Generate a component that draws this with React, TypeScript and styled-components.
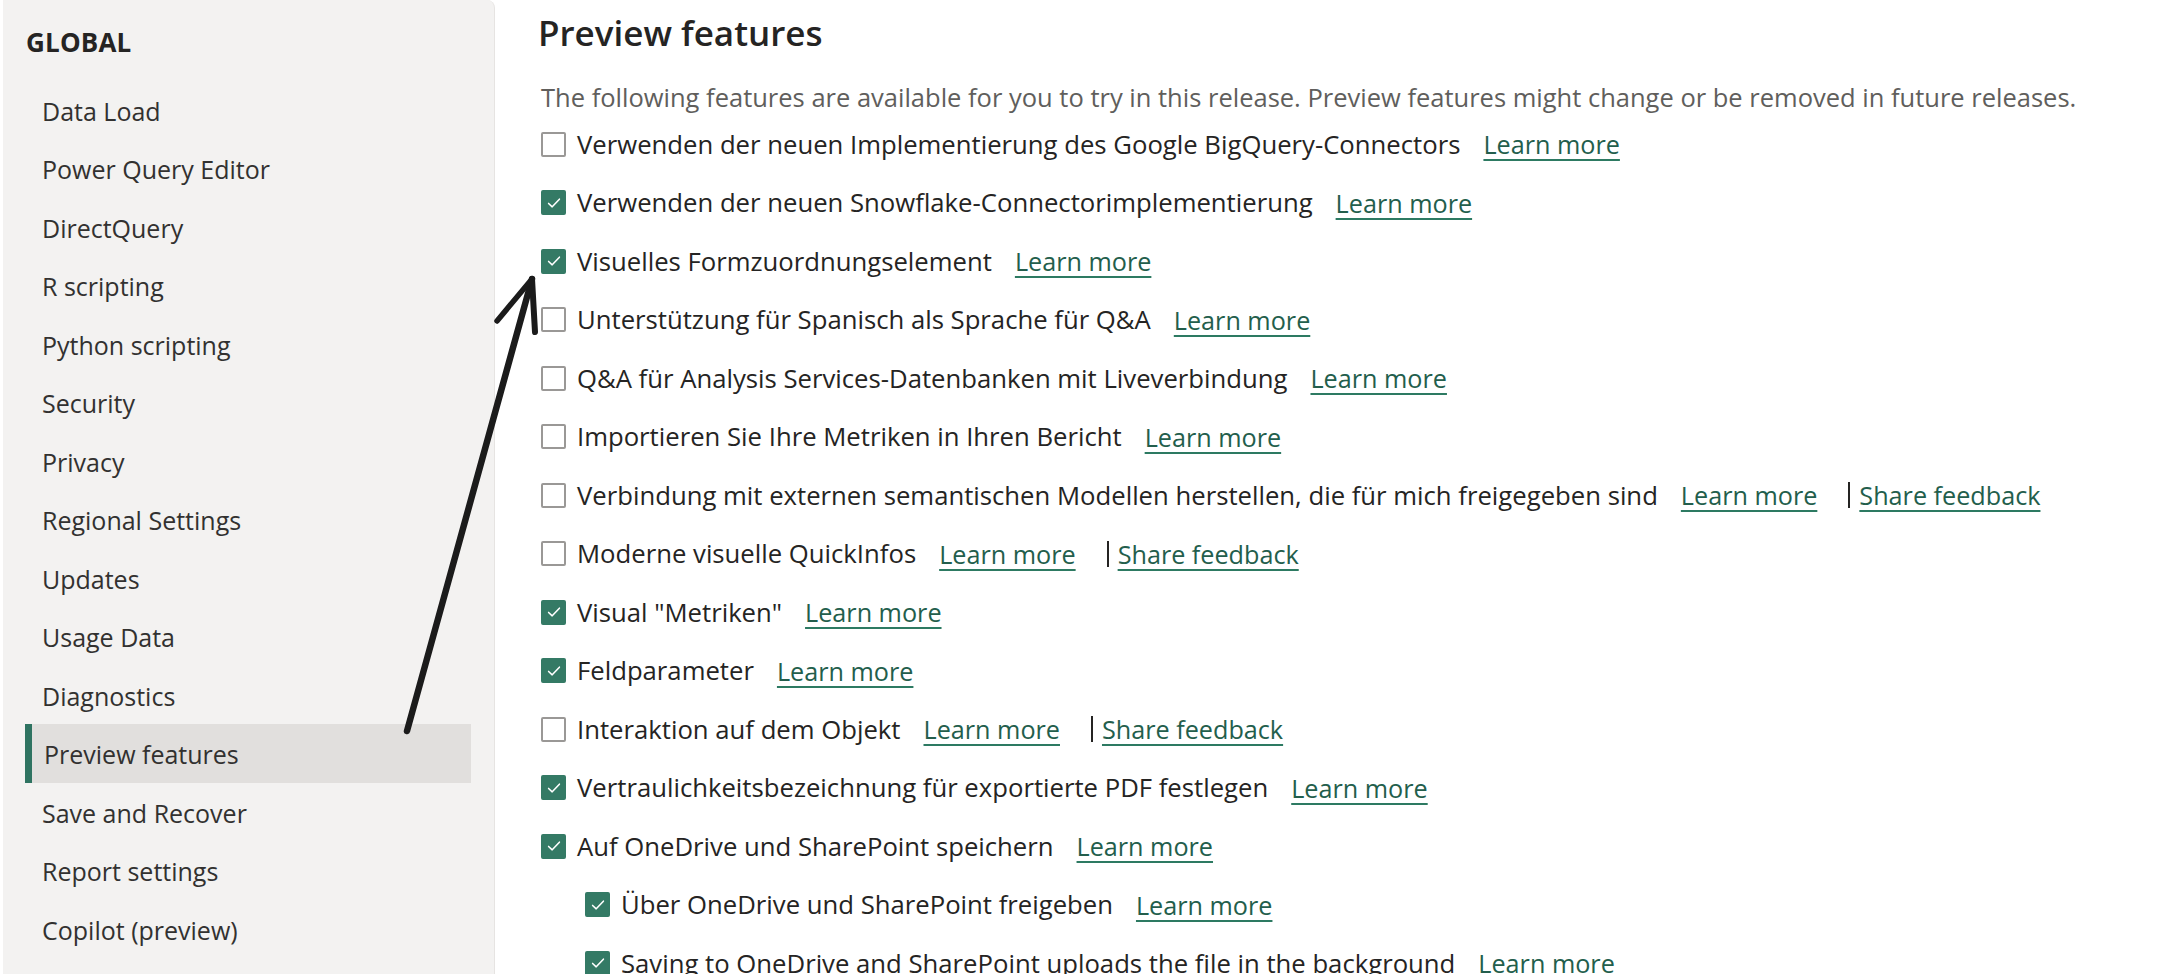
import React from "react";
import styled, { createGlobalStyle } from "styled-components";

const GlobalStyle = createGlobalStyle`
  html, body {
    margin: 0;
    padding: 0;
    background: #ffffff;
  }
  body {
    font-family: "Open Sans", "Noto Sans", "Liberation Sans", sans-serif;
    color: #252423;
  }
`;

const Page = styled.div`
  position: relative;
  display: flex;
  width: 2179px;
  height: 974px;
  overflow: hidden;
  background: #ffffff;
`;

const Sidebar = styled.nav`
  flex: 0 0 492px;
  margin-left: 3px;
  height: 100%;
  background: #f3f2f1;
  border-right: 1px solid #e6e4e2;
  border-top-right-radius: 8px;
  box-sizing: border-box;
  display: flex;
  flex-direction: column;
`;

const SectionTitle = styled.div`
  height: 80.5px;
  display: flex;
  align-items: center;
  padding-left: 23px;
  padding-top: 3px;
  box-sizing: border-box;
  font-size: 26px;
  font-weight: 700;
  color: #252423;
  letter-spacing: 0.2px;
`;

const NavList = styled.ul`
  list-style: none;
  margin: 0;
  padding: 0 0 0 22px;
  display: flex;
  flex-direction: column;
`;

const NavItem = styled.li<{ $active?: boolean }>`
  width: 446px;
  height: 58.5px;
  box-sizing: border-box;
  display: flex;
  align-items: center;
  padding-top: 2px;
  font-size: 25px;
  color: #323130;
  padding-left: ${(p) => (p.$active ? "12px" : "17px")};
  border-left: ${(p) => (p.$active ? "7px solid #2e7361" : "0")};
  background: ${(p) => (p.$active ? "#e1dfdd" : "transparent")};
`;

const Main = styled.main`
  flex: 1;
  padding-left: 43px;
  display: flex;
  flex-direction: column;
`;

const Heading = styled.h1`
  margin: 11px 0 0 0;
  font-size: 35px;
  line-height: 44px;
  font-weight: 600;
  color: #252423;
`;

const Description = styled.p`
  margin: 24px 0 0 3px;
  font-size: 25.5px;
  line-height: 36px;
  color: #605e5c;
`;

const FeatureList = styled.div`
  display: flex;
  flex-direction: column;
  padding-left: 3px;
`;

const Row = styled.div<{ $indent?: boolean }>`
  height: 58.5px;
  display: flex;
  align-items: center;
  padding-left: ${(p) => (p.$indent ? "44px" : "0")};
  font-size: 25.7px;
  color: #252423;
  white-space: nowrap;
`;

const Box = styled.span<{ $checked?: boolean }>`
  flex: 0 0 auto;
  width: 25px;
  height: 25px;
  box-sizing: border-box;
  border-radius: 2px;
  border: 2px solid ${(p) => (p.$checked ? "#347a65" : "#9a9896")};
  background: ${(p) => (p.$checked ? "#347a65" : "#ffffff")};
  display: flex;
  align-items: center;
  justify-content: center;
  margin-right: 11px;
`;

const Label = styled.span`
  margin-right: 23px;
`;

const Link = styled.a`
  font-size: 25.2px;
  color: #235e4c;
  text-decoration: underline;
  text-decoration-color: #2d7a62;
  text-decoration-thickness: 2px;
  text-underline-offset: 5px;
  cursor: pointer;
`;

const Divider = styled.span`
  display: inline-block;
  width: 2px;
  height: 26px;
  background: #252423;
  margin: 0 9px 0 31px;
`;

const ArrowLayer = styled.svg`
  position: absolute;
  left: 0;
  top: 0;
  width: 2179px;
  height: 974px;
  pointer-events: none;
`;

const navItems = [
  "Data Load",
  "Power Query Editor",
  "DirectQuery",
  "R scripting",
  "Python scripting",
  "Security",
  "Privacy",
  "Regional Settings",
  "Updates",
  "Usage Data",
  "Diagnostics",
  "Preview features",
  "Save and Recover",
  "Report settings",
  "Copilot (preview)",
];

type Feature = {
  label: string;
  checked: boolean;
  feedback?: boolean;
  indent?: boolean;
};

const features: Feature[] = [
  { label: "Verwenden der neuen Implementierung des Google BigQuery-Connectors", checked: false },
  { label: "Verwenden der neuen Snowflake-Connectorimplementierung", checked: true },
  { label: "Visuelles Formzuordnungselement", checked: true },
  { label: "Unterstützung für Spanisch als Sprache für Q&A", checked: false },
  { label: "Q&A für Analysis Services-Datenbanken mit Liveverbindung", checked: false },
  { label: "Importieren Sie Ihre Metriken in Ihren Bericht", checked: false },
  {
    label: "Verbindung mit externen semantischen Modellen herstellen, die für mich freigegeben sind",
    checked: false,
    feedback: true,
  },
  { label: "Moderne visuelle QuickInfos", checked: false, feedback: true },
  { label: 'Visual "Metriken"', checked: true },
  { label: "Feldparameter", checked: true },
  { label: "Interaktion auf dem Objekt", checked: false, feedback: true },
  { label: "Vertraulichkeitsbezeichnung für exportierte PDF festlegen", checked: true },
  { label: "Auf OneDrive und SharePoint speichern", checked: true },
  { label: "Über OneDrive und SharePoint freigeben", checked: true, indent: true },
  {
    label: "Saving to OneDrive and SharePoint uploads the file in the background",
    checked: true,
    indent: true,
  },
];

const Check = () => (
  <svg width="18" height="18" viewBox="0 0 16 16" fill="none">
    <path
      d="M3.2 8.4 L6.4 11.4 L12.8 4.6"
      stroke="#ffffff"
      strokeWidth="1.4"
      strokeLinecap="round"
      strokeLinejoin="round"
    />
  </svg>
);

export default function App() {
  return (
    <>
      <GlobalStyle />
      <Page>
        <Sidebar>
          <SectionTitle>GLOBAL</SectionTitle>
          <NavList>
            {navItems.map((item) => (
              <NavItem key={item} $active={item === "Preview features"}>
                {item}
              </NavItem>
            ))}
          </NavList>
        </Sidebar>
        <Main>
          <Heading>Preview features</Heading>
          <Description>
            The following features are available for you to try in this release. Preview features might
            change or be removed in future releases.
          </Description>
          <FeatureList>
            {features.map((f) => (
              <Row key={f.label} $indent={f.indent}>
                <Box $checked={f.checked}>{f.checked && <Check />}</Box>
                <Label>{f.label}</Label>
                <Link>Learn more</Link>
                {f.feedback && (
                  <>
                    <Divider />
                    <Link>Share feedback</Link>
                  </>
                )}
              </Row>
            ))}
          </FeatureList>
        </Main>
        <ArrowLayer viewBox="0 0 2179 974">
          <g stroke="#1b1b1b" strokeLinecap="round" strokeLinejoin="round" fill="none">
            <path d="M407 731 L532 279" strokeWidth="6.5" />
            <path d="M497 321 L532 279" strokeWidth="5.5" />
            <path d="M532 279 L535 332" strokeWidth="6" />
          </g>
        </ArrowLayer>
      </Page>
    </>
  );
}
